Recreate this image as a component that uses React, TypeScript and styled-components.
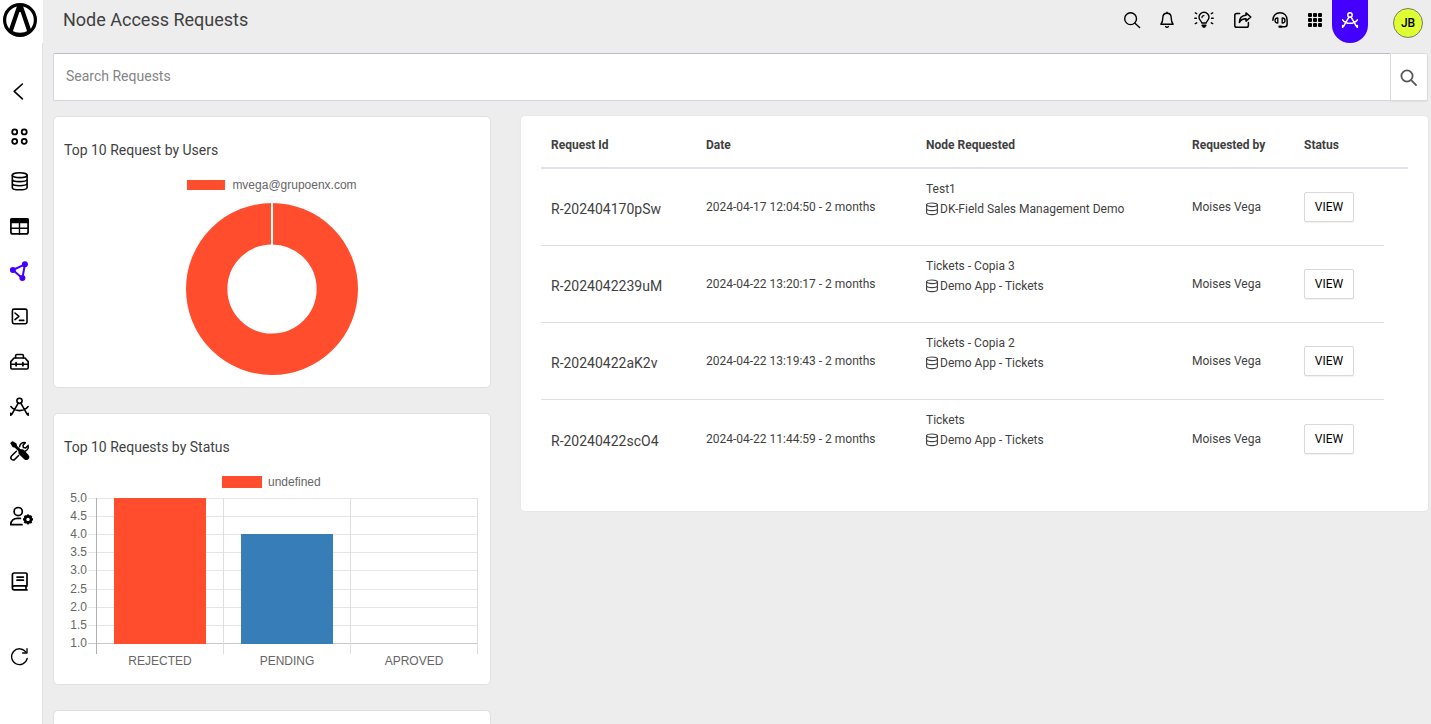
import React from "react";
import styled, { createGlobalStyle } from "styled-components";

const ink = "#3f3f3f";
const accent = "#4400ff";
const red = "#ff4d2d";
const blue = "#377eb8";

const GlobalStyle = createGlobalStyle`
  *, *::before, *::after { box-sizing: border-box; }
  body {
    margin: 0;
    background: #ededed;
    color: ${ink};
    font-family: Roboto, "Liberation Sans", sans-serif;
    font-size: 12px;
  }
  button, input { font-family: inherit; }
`;

const Shell = styled.div`
  display: flex;
  height: 100vh;
`;

const Sidebar = styled.aside`
  flex: none;
  display: flex;
  flex-direction: column;
  width: 43px;
  background: #fff;
`;

const LogoLink = styled.a`
  display: block;
  height: 43px;
  padding: 3px;
  color: #000;
`;

const Nav = styled.nav`
  flex: 1;
  display: flex;
  flex-direction: column;
  gap: 21px;
  padding: 36px 0 0 8px;
  border-right: 1px solid #dfdfdf;
`;

const NavButton = styled.button<{ $active?: boolean; $space?: number }>`
  display: block;
  width: 24px;
  height: 24px;
  margin: ${(p) => p.$space ?? 0}px 0 0;
  padding: 0;
  border: 0;
  background: none;
  color: ${(p) => (p.$active ? accent : "#000")};
  cursor: pointer;
`;

const Icon = styled.svg`
  display: block;
  overflow: visible;
  fill: none;
  stroke: currentColor;
  stroke-linecap: round;
  stroke-linejoin: round;
`;

const Page = styled.div`
  flex: 1;
  min-width: 0;
  display: flex;
  flex-direction: column;
`;

const Header = styled.header`
  flex: none;
  display: flex;
  align-items: flex-start;
  height: 53px;
  padding: 0 8px 0 20px;
`;

const PageTitle = styled.h1`
  flex: 1;
  margin: 0;
  font-size: 18px;
  font-weight: 400;
  line-height: 40px;
`;

const ToolButton = styled.button<{ $active?: boolean }>`
  height: 43px;
  padding: 10px 10px 13px;
  border: 0;
  border-radius: 0 0 18px 18px;
  background: ${(p) => (p.$active ? accent : "transparent")};
  color: ${(p) => (p.$active ? "#fff" : "#000")};
  cursor: pointer;
`;

const Avatar = styled.button`
  width: 30px;
  height: 30px;
  margin: 8px 0 0 25px;
  padding: 0;
  border: 1px solid #777;
  border-radius: 50%;
  background: #e0ff33;
  color: #000;
  font-size: 12px;
  font-weight: 500;
`;

const Content = styled.main`
  flex: 1;
  min-height: 0;
  padding: 0 3px 0 10px;
  overflow-y: auto;
  scrollbar-width: none;
`;

const SearchForm = styled.form`
  display: flex;
  height: 48px;
  margin-bottom: 15px;
`;

const SearchInput = styled.input`
  flex: 1;
  min-width: 0;
  padding: 0 12px 2px;
  border: 1px solid #d3d6e0;
  border-top-color: #b9bbcb;
  border-right: 0;
  border-radius: 2px 0 0 2px;
  background: #fff;
  color: ${ink};
  font-size: 14px;
  outline: none;
  &::placeholder { color: #858585; opacity: 1; }
`;

const SearchButton = styled.button`
  flex: none;
  width: 38px;
  padding: 2px 0 0 9px;
  border: 1px solid #dadada;
  border-radius: 0 2px 2px 0;
  background: #fff;
  color: #5a5a5a;
  box-shadow: 0 1px 1px rgba(0, 0, 0, 0.06);
`;

const Columns = styled.div`
  display: grid;
  grid-template-columns: minmax(0, 438fr) minmax(0, 907fr);
  gap: 30px;
  align-items: start;
`;

const Stack = styled.div`
  display: flex;
  flex-direction: column;
  gap: 25px;
`;

const Card = styled.section`
  min-height: 272px;
  padding: 24px 10px 12px;
  border: 1px solid #dfe0e6;
  border-radius: 5px;
  background: #fff;
`;

const CardTitle = styled.h2`
  margin: 0;
  font-size: 14px;
  font-weight: 400;
  line-height: 18px;
`;

const Legend = styled.div`
  display: flex;
  align-items: center;
  justify-content: center;
  gap: 7px;
  margin: 19px 0 11px;
  color: #666;
  font: 12px/14px "Liberation Sans", Arial, sans-serif;
`;

const Swatch = styled.span`
  width: 38px;
  height: 10px;
  background: ${red};
`;

const Donut = styled.svg`
  display: block;
  margin: 0 auto;
`;

const BarChart = styled.svg`
  display: block;
  width: 100%;
  margin-top: 14px;
  font: 12px "Liberation Sans", Arial, sans-serif;
  text { fill: #666; }
`;

const TableCard = styled.section`
  padding: 20px 20px 34px;
  border-radius: 4px;
  background: #fff;
  box-shadow: 0 0 2px rgba(0, 0, 0, 0.08);
`;

const Table = styled.table`
  width: 100%;
  table-layout: fixed;
  border-collapse: separate;
  border-spacing: 0;
`;

const HeadCell = styled.th`
  padding: 0 10px 13px;
  border-bottom: 2px solid #dee2e6;
  font-weight: 700;
  line-height: 18px;
  text-align: left;
`;

const Row = styled.tr`
  height: 77px;
  &:not(:last-child) td:not(:last-child) { border-bottom: 1px solid #dee0e2; }
`;

const Cell = styled.td`
  padding: 0 10px;
  line-height: 20px;
  white-space: nowrap;
`;

const IdCell = styled(Cell)`
  padding-top: 4px;
  font-size: 14px;
`;

const NodeCell = styled(Cell)`
  padding-top: 10px;
  vertical-align: top;
`;

const NodeApp = styled.div`
  display: flex;
  align-items: center;
  gap: 2px;
`;

const ViewButton = styled.button`
  display: block;
  width: 50px;
  height: 30px;
  padding: 0;
  border: 1px solid #d9d9d9;
  border-radius: 2px;
  background: #fff;
  color: #000;
  font-size: 12px;
  box-shadow: 0 1px 1px rgba(0, 0, 0, 0.06);
`;

const Logo = () => (
  <Icon width="34" height="34" viewBox="0 0 34 34" aria-hidden>
    <circle cx="17" cy="17" r="15.4" strokeWidth="3.2" />
    <path
      d="M14.2 2.5h5.6L28.2 27l-3.4 3.2L17.6 9h-1.2L9.2 30.2 5.8 27z"
      fill="currentColor"
      stroke="none"
    />
    <path d="M8 28.4q9 4.6 18 0" strokeWidth="2" />
  </Icon>
);

const SmallDatabase = () => (
  <Icon width="12" height="14" viewBox="0 0 12 14" strokeWidth="1.1" aria-hidden>
    <ellipse cx="6" cy="2.8" rx="5.4" ry="1.8" />
    <path d="M.6 2.8v8c0 2.4 10.8 2.4 10.8 0v-8M.6 6.8c0 2.4 10.8 2.4 10.8 0" />
  </Icon>
);

const gearAngles = [0, 45, 90, 135, 180, 225, 270, 315];

const navIcons = {
  back: <path d="M14.4 5 6.2 12.4l8.2 7.4" strokeWidth="1.6" />,
  apps: (
    <g strokeWidth="1.8">
      <circle cx="6.7" cy="7.9" r="2.5" />
      <circle cx="16.2" cy="7.9" r="2.5" />
      <circle cx="6.7" cy="17.3" r="2.5" />
      <circle cx="16.2" cy="17.3" r="2.5" />
    </g>
  ),
  database: (
    <g strokeWidth="1.6">
      <ellipse cx="11.7" cy="6.2" rx="7.4" ry="2.4" />
      <path d="M4.3 6.2v12.2c0 3.2 14.8 3.2 14.8 0V6.2M4.3 10.2c0 3.2 14.8 3.2 14.8 0M4.3 14.3c0 3.2 14.8 3.2 14.8 0" />
    </g>
  ),
  table: (
    <g strokeWidth="1.7">
      <rect x="2.9" y="4.9" width="17.2" height="15" rx="2" />
      <path d="M3 5.2h17v3.2H3z" fill="currentColor" />
      <path d="M11.5 9v11M3 14.2h17" strokeWidth="1.4" />
    </g>
  ),
  graph: (
    <g strokeWidth="2">
      <path d="M4.9 11 16.9 5.3 14.4 19.3z" />
      <g fill="currentColor" stroke="none">
        <circle cx="4.9" cy="11" r="3" />
        <circle cx="16.9" cy="5.3" r="3" />
        <circle cx="14.4" cy="19.1" r="3" />
      </g>
    </g>
  ),
  terminal: (
    <g strokeWidth="1.6">
      <rect x="4.4" y="5.1" width="14.6" height="14.6" rx="1.6" />
      <path d="m7 9 3.9 3.3L7 15.6M11.4 16.4h4.4" />
    </g>
  ),
  toolbox: (
    <g strokeWidth="1.6">
      <path d="M2.8 12.6 6 9h11l3.2 3.6v6.2a1.2 1.2 0 0 1-1.2 1.2H4a1.2 1.2 0 0 1-1.2-1.2z" />
      <path d="M7.6 9V6.8c0-.8.5-1.3 1.3-1.3h5.2c.8 0 1.3.5 1.3 1.3V9M2.8 15.2h4.5M9 15.2h5M15.8 15.2h4.4" />
      <path d="M8.1 13.7v3M14.9 13.7v3" strokeWidth="1.8" />
    </g>
  ),
  compass: (
    <g strokeWidth="1.6">
      <circle cx="11.5" cy="6.8" r="2.6" />
      <path d="M10.2 9.2 3.8 20.4l-1 .8v-2M12.8 9.2l6.4 11.2 1 .8v-2M2.9 12.6c4.4 5.4 12.8 5.4 17.2 0" />
    </g>
  ),
  tools: (
    <g strokeWidth="1.5">
      <path
        d="M3 4.2 4.4 3l3.4 2 .6 2.2 3.6 3.6 2.8.2 5.2 5.6c.8 1 .7 2.2-.2 3-.9.9-2.100.9-3.100.1l-5.400-5.300-.3-2.700-3.600-3.600-2.200-.6z"
        fill="currentColor"
      />
      <path d="M11.6 7.800c.1-2.900 2.800-4.800 5.800-4.100L15 6.200l.4 2.300 2.300.4 2.400-2.500c.7 3-1.100 5.200-3.200 5.800M8.400 12.200l-4.700 4.600c-1.200 1.300-1 2.600-.2 3.500 1 .9 2.400.9 3.500-.2l3.600-3.600" />
    </g>
  ),
  users: (
    <g strokeWidth="1.7">
      <circle cx="10.2" cy="7.6" r="4.1" />
      <path d="M14 20.7H2.800c0-4.300 3.200-6.300 6.600-6.300h3" />
      <circle cx="20" cy="15.4" r="3" strokeWidth="2.6" />
      {gearAngles.map((angle) => (
        <path
          key={angle}
          d="M20 11.800V10.400"
          transform={`rotate(${angle} 20 15.4)`}
          strokeWidth="2.2"
          strokeLinecap="butt"
        />
      ))}
    </g>
  ),
  book: (
    <g strokeWidth="1.7">
      <path d="M19 16.9V5.2c0-.8-.4-1.2-1.2-1.2H6.3c-1.2 0-1.9.7-1.9 1.9V19c0 1.2.7 1.9 1.9 1.9H19M19 16.9H6.5c-1.4 0-2.1.8-2.1 1.9M18 17v4" />
      <path d="M9 8.1h6.4M9 11.2h6.4" />
    </g>
  ),
  reload: (
    <g strokeWidth="1.3">
      <path d="M18 8.2a7.900 7.900 0 1 0 1.200 6.200" />
      <path d="M19 4.600v4.400h-4.400" />
    </g>
  ),
};

type NavName = keyof typeof navIcons;

const navItems: { name: NavName; label: string; space?: number; active?: boolean }[] = [
  { name: "back", label: "Back" },
  { name: "apps", label: "Apps" },
  { name: "database", label: "Data" },
  { name: "table", label: "Tables" },
  { name: "graph", label: "Nodes", active: true },
  { name: "terminal", label: "Console" },
  { name: "toolbox", label: "Toolbox" },
  { name: "compass", label: "Design" },
  { name: "tools", label: "Tools" },
  { name: "users", label: "User settings", space: 20 },
  { name: "book", label: "Documentation", space: 20 },
  { name: "reload", label: "Reload", space: 30 },
];

const toolItems: { label: string; width: number; active?: boolean; art: React.ReactNode }[] = [
  {
    label: "Search",
    width: 16,
    art: (
      <g strokeWidth="1.4">
        <circle cx="6.6" cy="8.7" r="5.9" />
        <path d="m11 13.2 4.6 4.4" />
      </g>
    ),
  },
  {
    label: "Notifications",
    width: 14,
    art: (
      <g strokeWidth="1.4">
        <path d="M7 3.2c-2.8 0-4.2 2-4.2 4.6 0 3.2-.7 4.9-1.9 6.400h12.200c-1.200-1.500-1.900-3.200-1.900-6.400C11.200 5.200 9.800 3.200 7 3.200z" />
        <path d="M7 2.200v.8M5.700 16.600c.6.800 2 .8 2.600 0" />
      </g>
    ),
  },
  {
    label: "Ideas",
    width: 20,
    art: (
      <g strokeWidth="1.4">
        <path d="M7.800 13c0-1.800-2.800-2.700-2.800-5.700a5 5 0 0 1 10 0c0 3-2.800 3.900-2.800 5.700z" />
        <path d="M8.400 15.600h3.200M9.400 16.800h1.200" strokeWidth="2" />
        <path d="M8 7.600c0-1.300.7-2 2-2" strokeWidth="1.200" />
        <path d="M.8 8.200h1.600M17.600 8.200h1.600M1.300 2.900l1.400.8M18.700 2.900l-1.400.8M1.300 13.600l1.400-.8M18.700 13.600l-1.400-.8" />
      </g>
    ),
  },
  {
    label: "Share",
    width: 18,
    art: (
      <g strokeWidth="1.5">
        <path d="M5.600 3.600H2.600C1.400 3.600.8 4.200.8 5.400v10c0 1.200.6 1.800 1.800 1.800h10c1.200 0 1.800-.6 1.800-1.800v-3" />
        <path d="M12 2.900 16.800 7 12 11.100V8.800c-3 0-5 .7-6.600 3.600.1-4.400 2.700-7 6.600-7.200z" />
      </g>
    ),
  },
  {
    label: "Support",
    width: 16,
    art: (
      <g strokeWidth="1.5">
        <path d="M.9 10.200c0-4.600 3-7.400 7.100-7.400s7.100 2.800 7.100 7.400v4c0 1.700-1 2.500-2.500 2.500H8" />
        <path
          d="M5.800 8v5c-2 0-2.800-1-2.800-2.500S3.800 8 5.800 8zM10.200 8v5c2 0 2.800-1 2.800-2.500S12.200 8 10.200 8z"
          strokeWidth="1.300"
        />
        <path d="M7.400 16.700h1.800" strokeWidth="2.200" />
      </g>
    ),
  },
  {
    label: "All apps",
    width: 14,
    art: (
      <g fill="currentColor" stroke="none">
        {[0, 5, 10].map((x) =>
          [3, 8, 13].map((y) => <rect key={`${x}-${y}`} x={x} y={y} width="4" height="4" rx="1" />)
        )}
      </g>
    ),
  },
  {
    label: "Designer",
    width: 16,
    active: true,
    art: (
      <g strokeWidth="1.5">
        <circle cx="8" cy="5" r="2.200" />
        <path d="M6.900 7.100 1.400 16.600l-.8.600v-1.600M9.100 7.100l5.500 9.500.8.600v-1.600M.700 9.900c3.800 4.600 10.800 4.600 14.600 0" />
      </g>
    ),
  },
];

const requests = [
  { id: "R-202404170pSw", date: "2024-04-17 12:04:50 - 2 months", node: "Test1", app: "DK-Field Sales Management Demo", by: "Moises Vega" },
  { id: "R-2024042239uM", date: "2024-04-22 13:20:17 - 2 months", node: "Tickets - Copia 3", app: "Demo App - Tickets", by: "Moises Vega" },
  { id: "R-20240422aK2v", date: "2024-04-22 13:19:43 - 2 months", node: "Tickets - Copia 2", app: "Demo App - Tickets", by: "Moises Vega" },
  { id: "R-20240422scO4", date: "2024-04-22 11:44:59 - 2 months", node: "Tickets", app: "Demo App - Tickets", by: "Moises Vega" },
];

const columnWidths = [155, 220, 266, 112, 90, 24];
const ticks = ["5.0", "4.5", "4.0", "3.5", "3.0", "2.5", "2.0", "1.5", "1.0"];
const categories = ["REJECTED", "PENDING", "APROVED"];

const StatusChart = () => (
  <BarChart viewBox="0 0 416 202" role="img" aria-label="Top 10 Requests by Status">
    <rect x="158" y="6" width="40" height="12" fill={red} />
    <text x="204" y="16">undefined</text>
    {ticks.map((tick, i) => {
      const y = Math.round(28 + i * 18.1) + 0.5;
      const last = i === ticks.length - 1;
      return (
        <g key={tick}>
          <line x1="24" x2="414" y1={y} y2={y} stroke={last ? "#c8c8c8" : "#e5e5e5"} />
          <text x="23" y={y + 3.5} textAnchor="end">{tick}</text>
        </g>
      );
    })}
    {[0, 1, 2, 3].map((i) => (
      <line key={i} x1={32.5 + i * 127} x2={32.5 + i * 127} y1="28" y2="184" stroke={i ? "#dedede" : "#b0b0b0"} />
    ))}
    <rect x="50" y="28" width="92" height="146" fill={red} />
    <rect x="177" y="64" width="92" height="110" fill={blue} />
    {categories.map((name, i) => (
      <text key={name} x={96 + i * 127} y="195" textAnchor="middle">{name}</text>
    ))}
  </BarChart>
);

export default function App() {
  return (
    <>
      <GlobalStyle />
      <Shell>
        <Sidebar>
          <LogoLink href="#" aria-label="Home"><Logo /></LogoLink>
          <Nav>
            {navItems.map((item) => (
              <NavButton key={item.name} type="button" aria-label={item.label} $active={item.active} $space={item.space}>
                <Icon width="24" height="24" viewBox="0 0 24 24" aria-hidden>{navIcons[item.name]}</Icon>
              </NavButton>
            ))}
          </Nav>
        </Sidebar>
        <Page>
          <Header>
            <PageTitle>Node Access Requests</PageTitle>
            {toolItems.map((item) => (
              <ToolButton key={item.label} type="button" aria-label={item.label} $active={item.active}>
                <Icon width={item.width} height="20" viewBox={`0 0 ${item.width} 20`} aria-hidden>{item.art}</Icon>
              </ToolButton>
            ))}
            <Avatar type="button">JB</Avatar>
          </Header>
          <Content>
            <SearchForm role="search" onSubmit={(e) => e.preventDefault()}>
              <SearchInput type="text" placeholder="Search Requests" aria-label="Search Requests" />
              <SearchButton type="submit" aria-label="Search">
                <Icon width="18" height="18" viewBox="0 0 18 18" strokeWidth="1.8" aria-hidden>
                  <circle cx="7" cy="7" r="5.6" />
                  <path d="m11.2 11.2 4.8 4.8" />
                </Icon>
              </SearchButton>
            </SearchForm>
            <Columns>
              <Stack>
                <Card>
                  <CardTitle>Top 10 Request by Users</CardTitle>
                  <Legend><Swatch />mvega@grupoenx.com</Legend>
                  <Donut width="172" height="172" viewBox="0 0 172 172" role="img" aria-label="Top 10 Request by Users">
                    <circle cx="86" cy="86" r="65.3" fill="none" stroke={red} strokeWidth="41.4" />
                    <line x1="86" x2="86" y1="0" y2="43" stroke="#fff" strokeWidth="2" />
                  </Donut>
                </Card>
                <Card>
                  <CardTitle>Top 10 Requests by Status</CardTitle>
                  <StatusChart />
                </Card>
                <Card />
              </Stack>
              <TableCard>
                <Table>
                  <colgroup>
                    {columnWidths.map((width) => <col key={width} width={width} />)}
                  </colgroup>
                  <thead>
                    <tr>
                      <HeadCell>Request Id</HeadCell>
                      <HeadCell>Date</HeadCell>
                      <HeadCell>Node Requested</HeadCell>
                      <HeadCell>Requested by</HeadCell>
                      <HeadCell>Status</HeadCell>
                      <HeadCell />
                    </tr>
                  </thead>
                  <tbody>
                    {requests.map((r) => (
                      <Row key={r.id}>
                        <IdCell>{r.id}</IdCell>
                        <Cell>{r.date}</Cell>
                        <NodeCell>
                          <div>{r.node}</div>
                          <NodeApp>
                            <SmallDatabase />
                            {r.app}
                          </NodeApp>
                        </NodeCell>
                        <Cell>{r.by}</Cell>
                        <Cell><ViewButton type="button">VIEW</ViewButton></Cell>
                        <Cell />
                      </Row>
                    ))}
                  </tbody>
                </Table>
              </TableCard>
            </Columns>
          </Content>
        </Page>
      </Shell>
    </>
  );
}
